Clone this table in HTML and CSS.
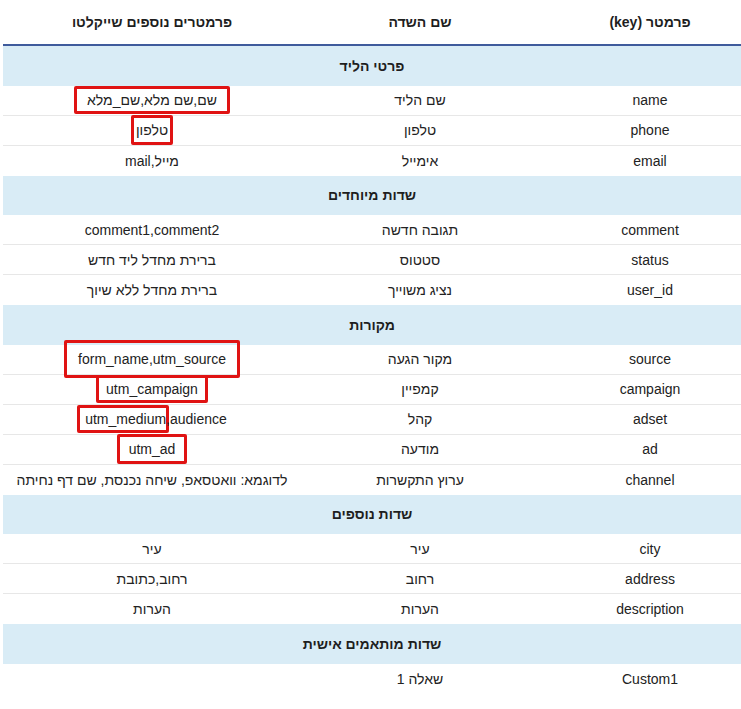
FILE: index.html
```html
<!DOCTYPE html>
<html lang="he" dir="rtl">
<head>
<meta charset="utf-8">
<link rel="stylesheet" href="styles.css">
</head>
<body>
<div class="wrap">
<table class="params">
  <colgroup>
    <col class="c-key">
    <col class="c-field">
    <col class="c-extra">
  </colgroup>
  <thead>
    <tr>
      <th class="key">פרמטר (key)</th>
      <th>שם השדה</th>
      <th>פרמטרים נוספים שייקלטו</th>
    </tr>
  </thead>
  <tbody>
    <tr class="section"><td colspan="3">פרטי הליד</td></tr>
    <tr><td class="key">name</td><td>שם הליד</td><td><span class="mark m-name">שם,שם מלא,שם_מלא</span></td></tr>
    <tr><td class="key">phone</td><td>טלפון</td><td><span class="mark m-phone">טלפון</span></td></tr>
    <tr class="last"><td class="key">email</td><td>אימייל</td><td>מייל,mail</td></tr>

    <tr class="section"><td colspan="3">שדות מיוחדים</td></tr>
    <tr><td class="key">comment</td><td>תגובה חדשה</td><td>comment1,comment2</td></tr>
    <tr><td class="key">status</td><td>סטטוס</td><td>ברירת מחדל ליד חדש</td></tr>
    <tr class="last"><td class="key">user_id</td><td>נציג משוייך</td><td>ברירת מחדל ללא שיוך</td></tr>

    <tr class="section"><td colspan="3">מקורות</td></tr>
    <tr><td class="key">source</td><td>מקור הגעה</td><td><span class="mark m-source">form_name,utm_source</span></td></tr>
    <tr><td class="key">campaign</td><td>קמפיין</td><td><span class="mark m-campaign">utm_campaign</span></td></tr>
    <tr><td class="key">adset</td><td>קהל</td><td><span class="ltr"><span class="mark m-medium">utm_medium</span>,audience</span></td></tr>
    <tr><td class="key">ad</td><td>מודעה</td><td><span class="mark m-ad">utm_ad</span></td></tr>
    <tr class="last"><td class="key">channel</td><td>ערוץ התקשרות</td><td>לדוגמא: וואטסאפ, שיחה נכנסת, שם דף נחיתה</td></tr>

    <tr class="section"><td colspan="3">שדות נוספים</td></tr>
    <tr><td class="key">city</td><td>עיר</td><td>עיר</td></tr>
    <tr><td class="key">address</td><td>רחוב</td><td>רחוב,כתובת</td></tr>
    <tr class="last"><td class="key">description</td><td>הערות</td><td>הערות</td></tr>

    <tr class="section"><td colspan="3">שדות מותאמים אישית</td></tr>
    <tr class="last"><td class="key">Custom1</td><td>שאלה 1</td><td></td></tr>
  </tbody>
</table>
</div>
</body>
</html>
```

FILE: styles.css
```css
html, body {
  margin: 0;
  padding: 0;
  background: #ffffff;
}

body {
  font-family: "Liberation Sans", Arial, sans-serif;
  font-size: 14px;
  color: #222222;
}

.wrap {
  padding: 0 0 0 3px;
}

.params {
  width: 738px;
  border-collapse: collapse;
  table-layout: fixed;
  direction: rtl;
}

.c-key { width: 202px; }
.c-field { width: 238px; }
.c-extra { width: 298px; }

.params th,
.params td {
  text-align: center;
  vertical-align: middle;
  padding: 0;
  white-space: nowrap;
}

.params th.key,
.params td.key {
  padding-left: 20px;
}

.params thead th {
  height: 44px;
  font-weight: bold;
  color: #1e1e1e;
  border-bottom: 2px solid #3f5b9c;
}

.params tbody tr td {
  height: 29px;
  border-bottom: 1px solid #e7e7e7;
}

.params tbody tr.last td {
  border-bottom: none;
  height: 30px;
}

.params tbody tr.section td {
  height: 39.5px;
  background: #d9ecf6;
  font-weight: bold;
  color: #1e1e1e;
  border-bottom: none;
}

.ltr {
  direction: ltr;
  unicode-bidi: isolate;
}

.mark {
  border: 3px solid #e01313;
  border-radius: 2px;
}

.m-name { padding: 3px 10px 3px 10px; }
.m-phone { padding: 4px 2px 4px 2px; }
.m-source { padding: 8px 11px 8px 11px; }
.m-campaign { padding: 3px 7px 3px 7px; }
.m-medium { padding: 3px 0 3px 5px; margin-right: -3px; }
.m-ad { padding: 4px 9px 4px 9px; }
```
